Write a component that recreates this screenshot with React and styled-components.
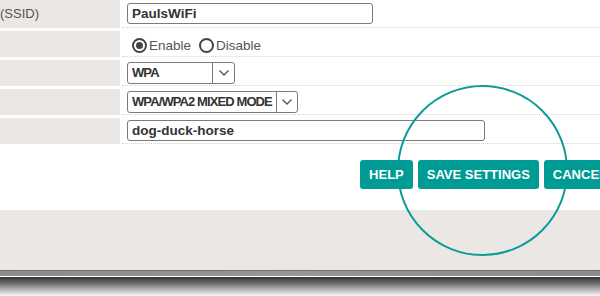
import React from "react";
import styled, { createGlobalStyle } from "styled-components";

const GlobalStyle = createGlobalStyle`
  html, body {
    margin: 0;
    padding: 0;
    background: #fff;
  }
  body {
    font-family: "Liberation Sans", Arial, sans-serif;
  }
`;

const rows = [
  { label: "(SSID)", type: "input", value: "PaulsWiFi", width: 246 },
  { label: "", type: "radio" },
  { label: "", type: "select", value: "WPA", width: 108 },
  { label: "", type: "select", value: "WPA/WPA2 MIXED MODE", width: 171 },
  { label: "", type: "input", value: "dog-duck-horse", width: 358 },
];

const App = () => {
  return (
    <Viewport>
      <GlobalStyle />
      <Sheet>
        <SettingsTable>
          {rows.map((row, i) => (
            <React.Fragment key={i}>
              <Label>{row.label}</Label>
              <Cell>
                {row.type === "input" && (
                  <TextField $width={row.width}>{row.value}</TextField>
                )}
                {row.type === "select" && (
                  <SelectBox $width={row.width}>
                    <SelectValue>{row.value}</SelectValue>
                    <Chevron>
                      <svg width="12" height="8" viewBox="0 0 12 8">
                        <path
                          d="M1.5 1.5 L6 6 L10.5 1.5"
                          fill="none"
                          stroke="#555"
                          strokeWidth="1.4"
                        />
                      </svg>
                    </Chevron>
                  </SelectBox>
                )}
                {row.type === "radio" && (
                  <RadioGroup>
                    <RadioOption>
                      <RadioDot $checked />
                      Enable
                    </RadioOption>
                    <RadioOption>
                      <RadioDot />
                      Disable
                    </RadioOption>
                  </RadioGroup>
                )}
              </Cell>
            </React.Fragment>
          ))}
        </SettingsTable>

        <ButtonRow>
          <Button>Help</Button>
          <Button>Save Settings</Button>
          <Button>Cancel</Button>
        </ButtonRow>

        <FooterPanel />
        <FrameEdge />
        <Shadow />
      </Sheet>
      <Highlight />
    </Viewport>
  );
};

export default App;

const Viewport = styled.div`
  position: relative;
  width: 600px;
  height: 296px;
  overflow: hidden;
  background: #fff;
`;

const Sheet = styled.div`
  width: 640px;
  display: flex;
  flex-direction: column;
`;

const SettingsTable = styled.div`
  display: grid;
  grid-template-columns: 120px 1fr;
  grid-template-rows: 28px repeat(4, 26px);
  column-gap: 2px;
  row-gap: 3px;
`;

const Label = styled.div`
  background: #eae7e4;
  color: #555;
  font-size: 13px;
  display: flex;
  align-items: center;
  padding-bottom: 1px;
`;

const Cell = styled.div`
  display: flex;
  align-items: center;
  padding-left: 5px;
  border-bottom: 1px dotted #d4d4d4;
`;

const TextField = styled.div`
  box-sizing: border-box;
  width: ${(p) => p.$width}px;
  height: 21px;
  border: 1px solid #7a7a7a;
  border-radius: 3px;
  padding: 0 4px;
  display: flex;
  align-items: center;
  font-size: 13.5px;
  font-weight: bold;
  color: #333;
`;

const SelectBox = styled.div`
  box-sizing: border-box;
  width: ${(p) => p.$width}px;
  height: 22px;
  border: 1px solid #7a7a7a;
  border-radius: 3px;
  display: flex;
  align-items: stretch;
`;

const SelectValue = styled.div`
  flex: 1;
  padding: 0 4px;
  display: flex;
  align-items: center;
  font-size: 13px;
  font-weight: bold;
  letter-spacing: -0.9px;
  color: #333;
  white-space: nowrap;
`;

const Chevron = styled.div`
  width: 21px;
  border-left: 1px solid #7a7a7a;
  display: flex;
  align-items: center;
  justify-content: center;
`;

const RadioGroup = styled.div`
  display: flex;
  gap: 8px;
  padding-left: 5px;
  padding-top: 4px;
`;

const RadioOption = styled.label`
  display: flex;
  align-items: center;
  gap: 2px;
  font-size: 13.5px;
  color: #555;
`;

const RadioDot = styled.span`
  box-sizing: border-box;
  width: 15px;
  height: 15px;
  border-radius: 50%;
  border: 2px solid #444;
  display: flex;
  align-items: center;
  justify-content: center;

  &::after {
    content: "";
    width: 7px;
    height: 7px;
    border-radius: 50%;
    background: ${(p) => (p.$checked ? "#444" : "transparent")};
  }
`;

const ButtonRow = styled.div`
  position: relative;
  z-index: 2;
  display: flex;
  justify-content: flex-end;
  gap: 5px;
  padding: 16px 24px 21px 0;
`;

const Button = styled.button`
  height: 29px;
  padding: 0 9px;
  border: none;
  border-radius: 3px;
  background: #009b94;
  color: #fff;
  font-family: "Liberation Sans", Arial, sans-serif;
  font-size: 13px;
  font-weight: bold;
  text-transform: uppercase;
  white-space: nowrap;
`;

const FooterPanel = styled.div`
  height: 60px;
  background: #eae7e4;
`;

const FrameEdge = styled.div`
  height: 5px;
  background: linear-gradient(to right, #8b8b8b, #979797 45%, #8a8a8a);
  border-top: 1px solid #6f6f6f;
  border-bottom: 1px solid #fff;
`;

const Shadow = styled.div`
  height: 20px;
  background: linear-gradient(#333, #6a6a6a 30%, #cfcfcf 75%, #fff);
`;

const Highlight = styled.div`
  position: absolute;
  z-index: 1;
  left: 397px;
  top: 85px;
  width: 167px;
  height: 167px;
  border: 2px solid #0d9c95;
  border-radius: 50%;
  pointer-events: none;
`;
